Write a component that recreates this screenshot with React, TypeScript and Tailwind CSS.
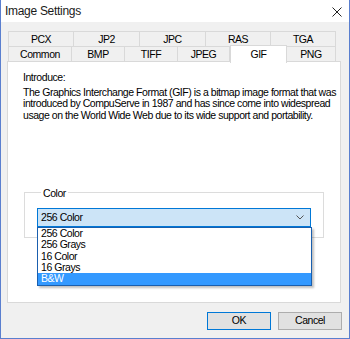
import React from "react";

const row1 = [
  { label: "PCX", w: "w-[66px]" },
  { label: "JP2", w: "w-[67px]" },
  { label: "JPC", w: "w-[67px]" },
  { label: "RAS", w: "w-[66px]" },
  { label: "TGA", w: "w-[66px]" },
];

const row2 = [
  { label: "Common", w: "w-[64px]" },
  { label: "BMP", w: "w-[54px]" },
  { label: "TIFF", w: "w-[54px]" },
  { label: "JPEG", w: "w-[53px]" },
  { label: "GIF", w: "w-[57px]", active: true },
  { label: "PNG", w: "w-[50px]" },
];

const options = ["256 Color", "256 Grays", "16 Color", "16 Grays", "B&W"];

const intro = [
  "The Graphics Interchange Format (GIF) is a bitmap image format that was",
  "introduced by CompuServe in 1987 and has since come into widespread",
  "usage on the World Wide Web due to its wide support and portability.",
];

function Tab({ label, w, active }: { label: string; w: string; active?: boolean }) {
  if (active) {
    return (
      <div
        className={`${w} relative z-10 -mt-[2px] -mb-px flex h-[18px] shrink-0 items-start justify-center border border-b-0 border-[#d9d9d9] bg-white pt-[1px]`}
      >
        {label}
      </div>
    );
  }
  return (
    <div
      className={`${w} -ml-px flex h-[16px] shrink-0 items-center justify-center border border-b-0 border-[#d9d9d9] bg-[#f0f0f0] first:ml-0`}
    >
      {label}
    </div>
  );
}

export default function App() {
  return (
    <div
      className="flex h-[339px] w-[350px] flex-col overflow-hidden border-x border-b border-[#5a7fcf] bg-[#f0f0f0] text-[10.5px] tracking-[-0.45px] text-black"
      style={{ fontFamily: '"Liberation Sans", Arial, sans-serif' }}
    >
      {/* title bar */}
      <div className="flex h-[22px] shrink-0 items-center justify-between bg-white pl-[4px] pr-[7px]">
        <span className="text-[12px] tracking-[-0.3px] text-[#1a1a1a]">Image Settings</span>
        <svg width="10" height="10" viewBox="0 0 10 10" className="mt-[2px]">
          <path d="M0.5 0.5 L9.5 9.5 M9.5 0.5 L0.5 9.5" stroke="#222" strokeWidth="1" fill="none" />
        </svg>
      </div>

      <div className="flex flex-1 flex-col pl-[6px] pr-[6px] pt-[9px]">
        {/* tabs */}
        <div className="flex pl-[1px]">
          {row1.map((t) => (
            <Tab key={t.label} {...t} />
          ))}
        </div>
        <div className="-mt-px flex items-end pl-[1px]">
          {row2.map((t) => (
            <Tab key={t.label} {...t} />
          ))}
        </div>

        {/* panel */}
        <div className="-mt-px h-[242px] w-[334px] border border-[#d9d9d9] bg-white pl-[15px] pt-[9px]">
          <div className="leading-[12px]">Introduce:</div>
          <p className="mt-[4px] whitespace-nowrap leading-[11.3px]">
            {intro.map((l) => (
              <span key={l} className="block">
                {l}
              </span>
            ))}
          </p>

          <fieldset className="relative mt-[66px] ml-px h-[51px] w-[300px] border border-[#dcdcdc] px-[12px]">
            <legend className="ml-[4px] px-[2px] leading-[12px]">Color</legend>
            <div className="mt-[9px] flex h-[19px] items-center justify-between border border-[#0078d7] bg-[#cce4f7] pl-[3px] pr-[6px]">
              <span>256 Color</span>
              <svg width="8" height="5" viewBox="0 0 8 5">
                <path d="M0.5 0.5 L4 4 L7.5 0.5" stroke="#555" strokeWidth="1" fill="none" />
              </svg>
            </div>
            <div className="absolute left-[12px] top-[28px] z-10 w-[275px] border border-[#1a5fae] bg-white shadow-[2px_2px_2px_rgba(0,0,0,0.25)]">
              {options.map((o) => (
                <div
                  key={o}
                  className={`h-[11.4px] pl-[3px] leading-[11.4px] ${o === "B&W" ? "bg-[#3399ff] text-white" : ""}`}
                >
                  {o}
                </div>
              ))}
            </div>
          </fieldset>
        </div>

        {/* buttons */}
        <div className="mt-[9px] flex justify-end gap-[7px] pr-[1px]">
          <button className="h-[18px] w-[64px] border border-[#0078d7] bg-[#e1e1e1] text-[10.5px] tracking-[-0.45px]">
            OK
          </button>
          <button className="h-[18px] w-[64px] border border-[#adadad] bg-[#e1e1e1] text-[10.5px] tracking-[-0.45px]">
            Cancel
          </button>
        </div>
      </div>
    </div>
  );
}
